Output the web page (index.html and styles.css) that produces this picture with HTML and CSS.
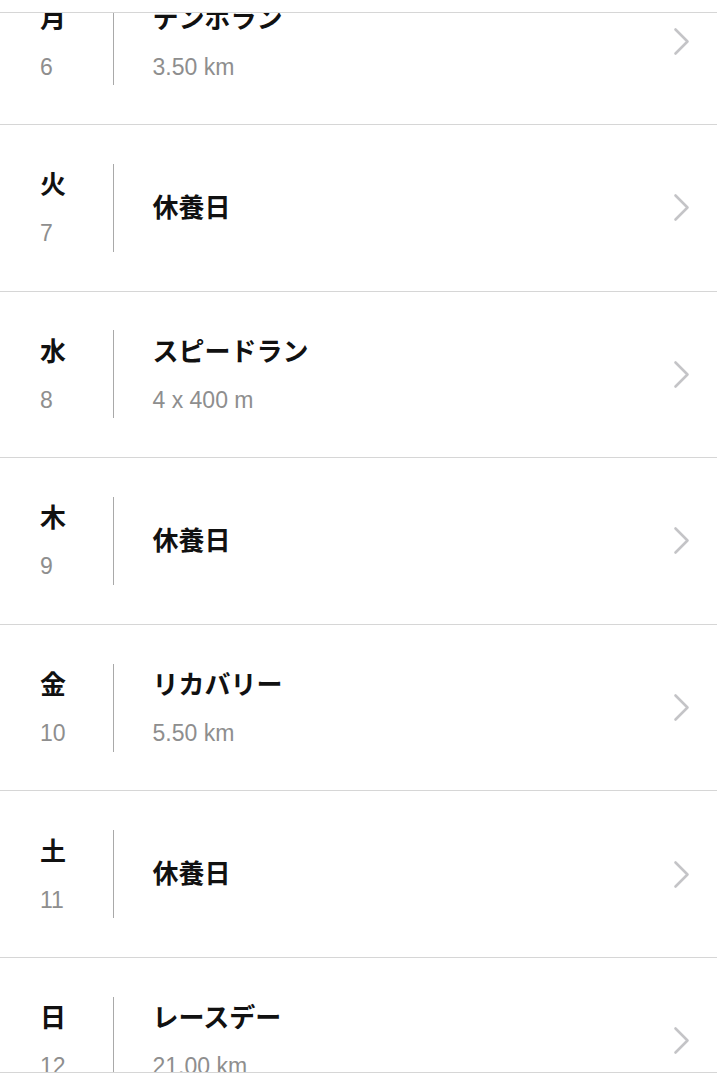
FILE: index.html
```html
<!DOCTYPE html>
<html lang="ja">
  <head>
    <meta charset="UTF-8" />
    <meta name="viewport" content="width=device-width, initial-scale=1.0" />
    <title>トレーニングプラン</title>
    <link rel="stylesheet" href="styles.css">
  </head>
  <body>
    <header class="top-bar"></header>

    <main class="plan">
      <ul class="plan-list">
        <li class="plan-row">
          <div class="plan-day">
            <span class="plan-day-name">月</span>
            <span class="plan-day-num">6</span>
          </div>
          <div class="plan-info">
            <span class="plan-title">テンポラン</span>
            <span class="plan-sub">3.50 km</span>
          </div>
          <svg class="chevron" viewBox="0 0 17 29"><polyline points="2.5,2.5 14.5,14.5 2.5,26.5" /></svg>
        </li>
        <li class="plan-row">
          <div class="plan-day">
            <span class="plan-day-name">火</span>
            <span class="plan-day-num">7</span>
          </div>
          <div class="plan-info">
            <span class="plan-title">休養日</span>
          </div>
          <svg class="chevron" viewBox="0 0 17 29"><polyline points="2.5,2.5 14.5,14.5 2.5,26.5" /></svg>
        </li>
        <li class="plan-row">
          <div class="plan-day">
            <span class="plan-day-name">水</span>
            <span class="plan-day-num">8</span>
          </div>
          <div class="plan-info">
            <span class="plan-title">スピードラン</span>
            <span class="plan-sub">4 x 400 m</span>
          </div>
          <svg class="chevron" viewBox="0 0 17 29"><polyline points="2.5,2.5 14.5,14.5 2.5,26.5" /></svg>
        </li>
        <li class="plan-row">
          <div class="plan-day">
            <span class="plan-day-name">木</span>
            <span class="plan-day-num">9</span>
          </div>
          <div class="plan-info">
            <span class="plan-title">休養日</span>
          </div>
          <svg class="chevron" viewBox="0 0 17 29"><polyline points="2.5,2.5 14.5,14.5 2.5,26.5" /></svg>
        </li>
        <li class="plan-row">
          <div class="plan-day">
            <span class="plan-day-name">金</span>
            <span class="plan-day-num">10</span>
          </div>
          <div class="plan-info">
            <span class="plan-title">リカバリー</span>
            <span class="plan-sub">5.50 km</span>
          </div>
          <svg class="chevron" viewBox="0 0 17 29"><polyline points="2.5,2.5 14.5,14.5 2.5,26.5" /></svg>
        </li>
        <li class="plan-row">
          <div class="plan-day">
            <span class="plan-day-name">土</span>
            <span class="plan-day-num">11</span>
          </div>
          <div class="plan-info">
            <span class="plan-title">休養日</span>
          </div>
          <svg class="chevron" viewBox="0 0 17 29"><polyline points="2.5,2.5 14.5,14.5 2.5,26.5" /></svg>
        </li>
        <li class="plan-row">
          <div class="plan-day">
            <span class="plan-day-name">日</span>
            <span class="plan-day-num">12</span>
          </div>
          <div class="plan-info">
            <span class="plan-title">レースデー</span>
            <span class="plan-sub">21.00 km</span>
          </div>
          <svg class="chevron" viewBox="0 0 17 29"><polyline points="2.5,2.5 14.5,14.5 2.5,26.5" /></svg>
        </li>
      </ul>
    </main>

    <footer class="bottom-bar"></footer>
  </body>
</html>
```

FILE: styles.css
```css
html {
  box-sizing: border-box;
  font-family: "Liberation Sans", "Noto Sans CJK JP", sans-serif;
  font-size: 16px;
}

*,
*:before,
*:after {
  box-sizing: inherit;
}

body {
  margin: 0;
  height: 100vh;
  display: flex;
  flex-direction: column;
  background: #fff;
  color: #111;
  overflow: hidden;
}

/* barras de arriba y abajo */
.top-bar {
  height: 13px;
  flex-shrink: 0;
  background: #fff;
  border-bottom: 1px solid #d6d6d6;
}

.bottom-bar {
  height: 8px;
  flex-shrink: 0;
  background: #fff;
  border-top: 1px solid #d6d6d6;
}

/* lista desplazada */
.plan {
  flex: 1;
  overflow: hidden;
}

.plan-list {
  list-style: none;
  margin: -54.6px 0 0;
  padding: 0;
}

.plan-row {
  height: 166.6px;
  display: flex;
  align-items: center;
  padding: 0 27px 0 40px;
  border-bottom: 1px solid #d6d6d6;
}

.plan-day {
  width: 74px;
  height: 88px;
  display: flex;
  flex-direction: column;
  justify-content: center;
  border-right: 1.5px solid #a9a9a9;
}

.plan-day-name,
.plan-title {
  font-size: 26px;
  line-height: 34px;
  font-weight: 700;
  color: #111;
}

.plan-day-num,
.plan-sub {
  margin-top: 17px;
  font-size: 23px;
  line-height: 28px;
  color: #8e8e8e;
}

.plan-info {
  flex: 1;
  display: flex;
  flex-direction: column;
  padding-left: 38.5px;
}

.chevron {
  width: 17px;
  height: 29px;
  fill: none;
  stroke: #c4c4c7;
  stroke-width: 2.6;
  stroke-linecap: round;
  stroke-linejoin: round;
}
```
